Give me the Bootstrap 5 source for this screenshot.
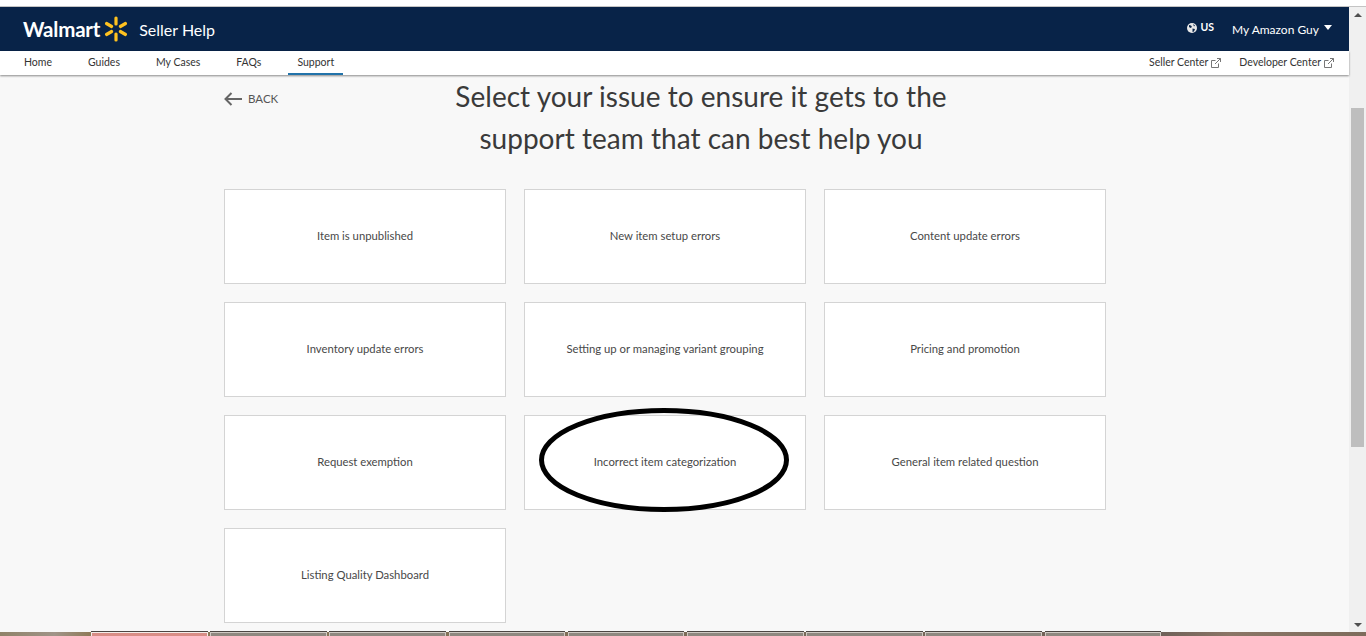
<!DOCTYPE html>
<html lang="en">
<head>
<meta charset="utf-8">
<title>Seller Help</title>
<link href="https://cdn.jsdelivr.net/npm/bootstrap@5.3.0/dist/css/bootstrap.min.css" rel="stylesheet">
<style>
html, body { height: 100%; overflow: hidden; }
body { background: #f8f8f8; font-family: Lato, "Liberation Sans", sans-serif; color: #333; }
.stage { height: 636px; }
.topstrip { height: 7px; background: #fff; border-bottom: 1px solid #c4c4c4; flex: none; }
.viewport { min-height: 0; }
.pagecol { min-width: 0; }
.brandbar { height: 44px; background: #082348; color: #fff; flex: none; padding: 0 17px 0 23px; }
.wm-word { font-size: 20.5px; font-weight: 700; letter-spacing: -.2px; line-height: 1; }
.spark { display: block; margin-left: 4px; margin-top: -1px; }
.seller-title { font-size: 16px; margin-left: 11px; margin-top: 1px; }
.locale { font-size: 10.5px; font-weight: 700; margin-right: 18px; margin-top: -3px; }
.account { font-size: 12px; margin-top: 2px; }
.caret-down { width: 0; height: 0; border-left: 4px solid transparent; border-right: 4px solid transparent; border-top: 5px solid #fff; margin-left: 5px; margin-top: -3px; }
.subnav { height: 24px; background: #fff; box-shadow: 0 1px 2px rgba(0,0,0,.45); flex: none; font-size: 10.5px; position: relative; z-index: 1; }
.subtab { display: block; height: 24px; line-height: 22px; color: #333; text-decoration: none; padding: 0 9px; margin-right: 18px; }
.subtab-first { padding-left: 24px; }
.subtab-on { border-bottom: 2px solid #2273aa; }
.extgroup { gap: 18px; padding-right: 15px; }
.extlink { color: #333; text-decoration: none; line-height: 22px; }
.extlink svg { margin-left: 3px; vertical-align: -2px; }
.mainarea { width: 882px; margin-left: 224px; }
.headrow { height: 114px; }
.backlink { color: #555; text-decoration: none; font-size: 11.5px; width: 227px; height: 48px; flex: none; }
.backlink svg { margin-right: 6px; }
.pagehead { width: 500px; font-size: 28px; font-weight: 400; line-height: 42px; text-align: center; color: #3a3a3a; margin: 0; white-space: nowrap; letter-spacing: .02px; }
.issuegrid { display: grid; grid-template-columns: repeat(3, 282px); column-gap: 18px; row-gap: 18px; }
.issuebox { height: 95px; background: #fff; border: 1px solid #d4d4d4; font-size: 11.3px; color: #484848; }
.issuebox-tall { position: relative; }
.ring { position: absolute; left: 13px; top: -8px; pointer-events: none; }
.sidescroll { width: 17px; background: #f0f0f0; flex: none; }
.arrow-up, .arrow-dn { width: 0; height: 0; border-left: 4px solid transparent; border-right: 4px solid transparent; }
.arrow-up { border-bottom: 4px solid #505050; margin: 6px auto 0; }
.arrow-dn { border-top: 4px solid #505050; margin: 0 auto 5px; }
.thumbbar { height: 339px; background: #bebebe; margin: 91px 2px 0 2px; }
.taskstrip { height: 4px; flex: none; background: linear-gradient(90deg, #8f8268, #a09488 4%, #8f7a58 6.6%, #6e6058 85%, #8a7566 90%, #7d6c5c); gap: 2.500px; padding-left: 91px; }
.taskcell { width: 116.700px; height: 4px; border: 1px solid #d0cac4; border-bottom: 0; box-shadow: 0 -1px 0 #4b4542; background: #8f8880; }
.taskcell-on { background: #d98d86; border-color: #f4ece8; }
</style>
</head>
<body>
<div class="stage d-flex flex-column">
  <div class="topstrip"></div>
  <div class="viewport d-flex flex-grow-1">
    <div class="pagecol flex-grow-1 d-flex flex-column">
      <header class="brandbar d-flex align-items-center">
        <span class="wm-word">Walmart</span>
        <svg class="spark" width="24" height="26" viewBox="-12 -13 24 26" aria-hidden="true">
          <g fill="#ffc220">
            <rect x="-1.6" y="-12.5" width="3.2" height="9" rx="1.5"/>
            <rect x="-1.6" y="-12.5" width="3.2" height="9" rx="1.5" transform="rotate(60)"/>
            <rect x="-1.6" y="-12.5" width="3.2" height="9" rx="1.5" transform="rotate(120)"/>
            <rect x="-1.6" y="-12.5" width="3.2" height="9" rx="1.5" transform="rotate(180)"/>
            <rect x="-1.6" y="-12.5" width="3.2" height="9" rx="1.5" transform="rotate(240)"/>
            <rect x="-1.6" y="-12.5" width="3.2" height="9" rx="1.5" transform="rotate(300)"/>
          </g>
        </svg>
        <span class="seller-title">Seller Help</span>
        <div class="ms-auto d-flex align-items-center">
          <span class="locale d-flex align-items-center gap-1">
            <svg width="10" height="10" viewBox="0 0 10 10" aria-hidden="true"><circle cx="5" cy="5" r="5" fill="#e8e8e8"/><path d="M2 2l2 .5 1 1.500-1.500 1L2 4zM6 1l2 1.500-1 1zM5.500 5.500l2.500 .5-1 2.500-1.500 .5z" fill="#082348"/></svg>
            US
          </span>
          <span class="account">My Amazon Guy</span>
          <span class="caret-down"></span>
        </div>
      </header>
      <nav class="subnav d-flex">
        <a class="subtab subtab-first" href="#">Home</a>
        <a class="subtab" href="#">Guides</a>
        <a class="subtab" href="#">My Cases</a>
        <a class="subtab" href="#">FAQs</a>
        <a class="subtab subtab-on" href="#">Support</a>
        <div class="ms-auto d-flex extgroup">
          <a class="extlink" href="#">Seller Center<svg width="10" height="10" viewBox="0 0 10 10" fill="none" stroke="#777" aria-hidden="true"><path d="M7.500 5.500v4h-7v-7h4M4 6l5.500-5.500M6 .5h3.500V4"/></svg></a>
          <a class="extlink" href="#">Developer Center<svg width="10" height="10" viewBox="0 0 10 10" fill="none" stroke="#777" aria-hidden="true"><path d="M7.500 5.500v4h-7v-7h4M4 6l5.500-5.500M6 .5h3.500V4"/></svg></a>
        </div>
      </nav>
      <main class="mainarea">
        <div class="headrow d-flex">
          <a class="backlink d-flex align-items-center" href="#">
            <svg width="18" height="14" viewBox="0 0 18 14" fill="none" stroke="#666" stroke-width="2" aria-hidden="true"><path d="M18 7H1.500M7.500 1l-6 6 6 6"/></svg>BACK
          </a>
          <h1 class="pagehead">Select your issue to ensure it gets to the<br>support team that can best help you</h1>
        </div>
        <div class="issuegrid">
          <div class="issuebox d-flex align-items-center justify-content-center">Item is unpublished</div>
          <div class="issuebox d-flex align-items-center justify-content-center">New item setup errors</div>
          <div class="issuebox d-flex align-items-center justify-content-center">Content update errors</div>
          <div class="issuebox d-flex align-items-center justify-content-center">Inventory update errors</div>
          <div class="issuebox d-flex align-items-center justify-content-center">Setting up or managing variant grouping</div>
          <div class="issuebox d-flex align-items-center justify-content-center">Pricing and promotion</div>
          <div class="issuebox d-flex align-items-center justify-content-center">Request exemption</div>
          <div class="issuebox issuebox-tall d-flex align-items-center justify-content-center">Incorrect item categorization
            <svg class="ring" width="254" height="108" viewBox="0 0 254 108" fill="none" aria-hidden="true"><ellipse cx="126" cy="52" rx="122.5" ry="49.5" stroke="#000" stroke-width="5"/></svg>
          </div>
          <div class="issuebox d-flex align-items-center justify-content-center">General item related question</div>
          <div class="issuebox d-flex align-items-center justify-content-center">Listing Quality Dashboard</div>
        </div>
      </main>
    </div>
    <div class="sidescroll d-flex flex-column">
      <div class="arrow-up"></div>
      <div class="thumbbar"></div>
      <div class="arrow-dn mt-auto"></div>
    </div>
  </div>
  <div class="taskstrip d-flex">
    <div class="taskcell taskcell-on"></div>
    <div class="taskcell"></div>
    <div class="taskcell"></div>
    <div class="taskcell"></div>
    <div class="taskcell"></div>
    <div class="taskcell"></div>
    <div class="taskcell"></div>
    <div class="taskcell"></div>
    <div class="taskcell"></div>
  </div>
</div>
<script src="https://cdn.jsdelivr.net/npm/bootstrap@5.3.0/dist/js/bootstrap.bundle.min.js"></script>
</body>
</html>
